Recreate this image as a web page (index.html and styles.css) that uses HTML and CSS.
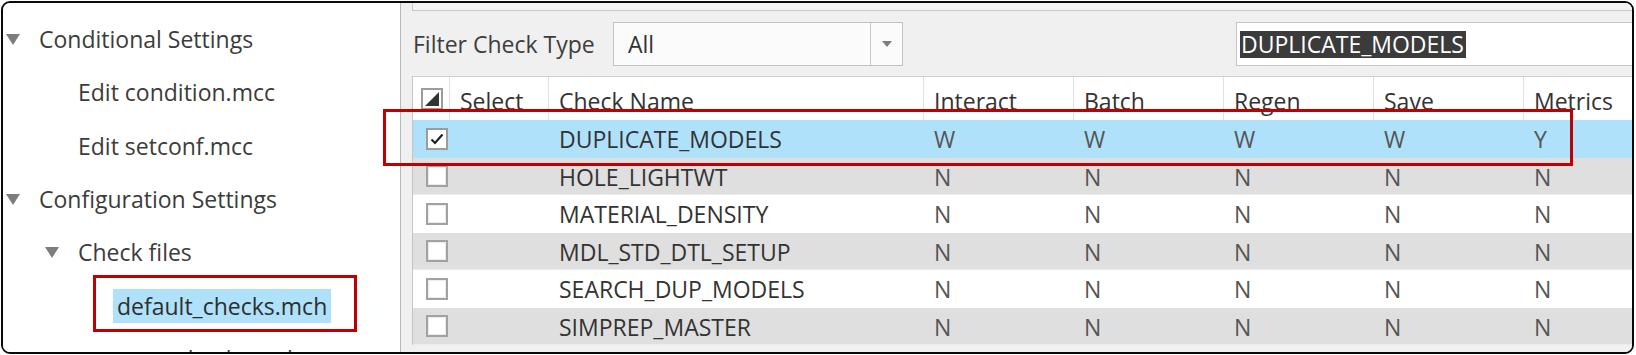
FILE: index.html
```html
<!DOCTYPE html>
<html lang="en">
<head>
    <meta charset="UTF-8">
    <title>ModelCHECK Configuration</title>
    <link rel="stylesheet" href="styles.css">
</head>
<body>

<div class="frame">

    <!-- Settings tree -->
    <div class="tree">
        <div class="node lvl0"><span class="caret open"></span><span class="label">Conditional Settings</span></div>
        <div class="node lvl1"><span class="caret"></span><span class="label">Edit condition.mcc</span></div>
        <div class="node lvl1"><span class="caret"></span><span class="label">Edit setconf.mcc</span></div>
        <div class="node lvl0"><span class="caret open"></span><span class="label">Configuration Settings</span></div>
        <div class="node lvl1"><span class="caret open"></span><span class="label">Check files</span></div>
        <div class="node lvl2"><span class="caret"></span><span class="label current">default_checks.mch</span></div>
        <div class="node lvl2"><span class="caret"></span><span class="label">start_checks.mch</span></div>
    </div>

    <!-- Check list -->
    <div class="main">
        <div class="topbox"></div>

        <div class="filter">
            <span class="filter-label">Filter Check Type</span>
            <div class="combo">
                <span class="combo-value">All</span>
                <span class="combo-btn">
                    <svg width="10" height="6" viewBox="0 0 10 6"><polygon points="0,0 10,0 5,6" fill="#7c7c7c"/></svg>
                </span>
            </div>
            <div class="search"><span class="search-sel">DUPLICATE_MODELS</span></div>
        </div>

        <div class="grid">
            <div class="row head">
                <div class="cell box-cell">
                    <svg class="cb" width="22" height="22" viewBox="0 0 22 22">
                        <rect x="1" y="1" width="20" height="20" fill="#fff" stroke="#9c9c9c" stroke-width="2"/>
                        <polygon points="4,18 18,4 18,18" fill="#333"/>
                    </svg>
                </div>
                <div class="cell">Select</div>
                <div class="cell">Check Name</div>
                <div class="cell">Interact</div>
                <div class="cell">Batch</div>
                <div class="cell">Regen</div>
                <div class="cell">Save</div>
                <div class="cell">Metrics</div>
            </div>

            <div class="row selected">
                <div class="cell box-cell">
                    <svg class="cb" width="22" height="22" viewBox="0 0 22 22">
                        <rect x="1" y="1" width="20" height="20" fill="#fff" stroke="#9c9c9c" stroke-width="2"/>
                        <path d="M5.5 11.5 L9 15 L16.5 6.5" fill="none" stroke="#222" stroke-width="2.2"/>
                    </svg>
                </div>
                <div class="cell"></div>
                <div class="cell name">DUPLICATE_MODELS</div>
                <div class="cell flag">W</div>
                <div class="cell flag">W</div>
                <div class="cell flag">W</div>
                <div class="cell flag">W</div>
                <div class="cell flag">Y</div>
            </div>

            <div class="row alt">
                <div class="cell box-cell"><span class="cb empty"></span></div>
                <div class="cell"></div>
                <div class="cell name">HOLE_LIGHTWT</div>
                <div class="cell flag">N</div>
                <div class="cell flag">N</div>
                <div class="cell flag">N</div>
                <div class="cell flag">N</div>
                <div class="cell flag">N</div>
            </div>

            <div class="row">
                <div class="cell box-cell"><span class="cb empty"></span></div>
                <div class="cell"></div>
                <div class="cell name">MATERIAL_DENSITY</div>
                <div class="cell flag">N</div>
                <div class="cell flag">N</div>
                <div class="cell flag">N</div>
                <div class="cell flag">N</div>
                <div class="cell flag">N</div>
            </div>

            <div class="row alt">
                <div class="cell box-cell"><span class="cb empty"></span></div>
                <div class="cell"></div>
                <div class="cell name">MDL_STD_DTL_SETUP</div>
                <div class="cell flag">N</div>
                <div class="cell flag">N</div>
                <div class="cell flag">N</div>
                <div class="cell flag">N</div>
                <div class="cell flag">N</div>
            </div>

            <div class="row">
                <div class="cell box-cell"><span class="cb empty"></span></div>
                <div class="cell"></div>
                <div class="cell name">SEARCH_DUP_MODELS</div>
                <div class="cell flag">N</div>
                <div class="cell flag">N</div>
                <div class="cell flag">N</div>
                <div class="cell flag">N</div>
                <div class="cell flag">N</div>
            </div>

            <div class="row alt">
                <div class="cell box-cell"><span class="cb empty"></span></div>
                <div class="cell"></div>
                <div class="cell name">SIMPREP_MASTER</div>
                <div class="cell flag">N</div>
                <div class="cell flag">N</div>
                <div class="cell flag">N</div>
                <div class="cell flag">N</div>
                <div class="cell flag">N</div>
            </div>
        </div>
    </div>

    <!-- Red callouts -->
    <div class="mark mark-row"></div>
    <div class="mark mark-file"></div>
</div>

</body>
</html>
```

FILE: styles.css
```css
body {
    margin: 0;
    background: #fff;
    font-family: "Open Sans", "Noto Sans", sans-serif;
    font-size: 23px;
    color: #3c3c3c;
}
.frame {
    position: relative;
    display: flex;
    box-sizing: border-box;
    width: 1633px;
    height: 353px;
    margin: 1px 0 0 1px;
    border: 2px solid #0a0a0a;
    border-radius: 9px;
    overflow: hidden;
    background: #fff;
}

/* tree */
.tree {
    flex: none;
    width: 397px;
    padding-top: 10px;
    border-right: 1px solid #b9b9b9;
    background: #fff;
}
.node {
    display: flex;
    align-items: center;
    height: 53.3px;
    line-height: 53.3px;
    white-space: nowrap;
}
.lvl0 { padding-left: 0; }
.lvl1 { padding-left: 39px; }
.lvl2 { padding-left: 78px; }
.caret {
    flex: none;
    width: 36px;
    height: 11px;
    position: relative;
}
.caret.open::before {
    content: "";
    position: absolute;
    left: 3px;
    top: 0;
    border-left: 7.5px solid transparent;
    border-right: 7.5px solid transparent;
    border-top: 11px solid #7d7d7d;
}
.label.current {
    margin-left: -4px;
    padding: 0 4px;
    line-height: 34px;
    background: #b0e1fb;
    color: #2e2e2e;
}

/* right side */
.main {
    flex: 1;
    min-width: 0;
    overflow: hidden;
    background: #f0f0f0;
}
.topbox {
    height: 7px;
    margin-left: 11px;
    border-left: 1px solid #c8c8c8;
    border-bottom: 1px solid #c8c8c8;
    background: #f4f4f4;
}
.filter {
    display: flex;
    align-items: center;
    height: 44px;
    margin-top: 11px;
    padding-left: 12px;
    white-space: nowrap;
}
.filter-label {
    flex: none;
    width: 200px;
    color: #3e3e3e;
}
.combo {
    flex: none;
    display: flex;
    box-sizing: border-box;
    width: 290px;
    height: 44px;
    border: 1px solid #c3c3c3;
    background: #fbfbfb;
}
.combo-value {
    flex: 1;
    padding-left: 14px;
    line-height: 42px;
    color: #333;
}
.combo-btn {
    display: flex;
    align-items: center;
    justify-content: center;
    width: 31px;
    border-left: 1px solid #c8c8c8;
}
.search {
    flex: none;
    display: flex;
    align-items: center;
    box-sizing: border-box;
    width: 500px;
    height: 44px;
    margin-left: 333px;
    padding-left: 3px;
    border: 1px solid #c6c6c6;
    background: #fff;
}
.search-sel {
    line-height: 27px;
    padding: 0 2px 0 1px;
    background: #3b3b3b;
    color: #fff;
}

/* check table */
.grid {
    width: 1300px;
    margin: 10px 0 0 11px;
    border-left: 1px solid #c4c4c4;
    border-top: 1px solid #cfcfcf;
    background: #fff;
}
.row {
    display: grid;
    grid-template-columns: 36px 99px 375px 150px 150px 150px 150px 150px;
    height: 37.5px;
    line-height: 39px;
    white-space: nowrap;
}
.row.alt {
    background: #dfdfdf;
    box-shadow: inset 0 -1px 0 #ececec;
}
.row.selected {
    background: #b0e1fb;
}
.row.head {
    height: 43px;
    line-height: 37px;
    color: #333;
}
.head .cell {
    padding-top: 6px;
    padding-left: 10px;
    border-left: 1px solid #e2e2e2;
}
.head .box-cell {
    padding: 11px 0 0 8px;
    border-left: none;
}
.cell {
    padding-left: 11px;
    overflow: hidden;
}
.box-cell {
    display: flex;
    align-items: center;
    padding-left: 13px;
}
.head .box-cell {
    align-items: flex-start;
}
.cb {
    display: block;
    flex: none;
}
.cb.empty {
    box-sizing: border-box;
    width: 22px;
    height: 22px;
    border: 2px solid #a2a2a2;
    background: #fff;
    box-shadow: inset 0 0 0 1px #ececec;
}
.name {
    color: #333;
}
.flag {
    color: #555;
}

/* red callouts */
.mark {
    position: absolute;
    border: 3px solid #c00000;
    box-sizing: border-box;
}
.mark-row {
    left: 380px;
    top: 106px;
    width: 1190px;
    height: 57px;
}
.mark-file {
    left: 90px;
    top: 272px;
    width: 264px;
    height: 57px;
}
```
